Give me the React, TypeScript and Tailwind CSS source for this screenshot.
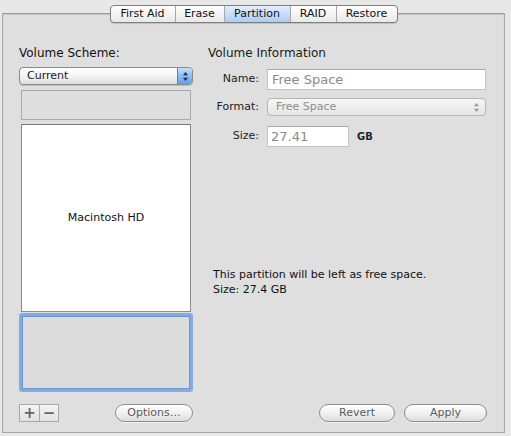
import React from "react";

const font = { fontFamily: '"DejaVu Sans", "Liberation Sans", sans-serif' };

const TABS = [
  { label: "First Aid", w: "w-[64px]" },
  { label: "Erase", w: "w-[49px]" },
  { label: "Partition", w: "w-[66px]", active: true },
  { label: "RAID", w: "w-[46px]" },
  { label: "Restore", w: "w-[61px]" },
];

function Arrows({ color }: { color: string }) {
  return (
    <svg width="7" height="11" viewBox="0 0 7 11">
      <path d="M3.5 1 L6 4.2 L1 4.2 Z" fill={color} />
      <path d="M3.5 10 L6 6.8 L1 6.8 Z" fill={color} />
    </svg>
  );
}

function PillButton({ label, w }: { label: string; w: string }) {
  return (
    <div
      className={`${w} h-[18px] rounded-full border border-[#8e8e8e] bg-gradient-to-b from-[#ffffff] via-[#f1f1f1] to-[#dcdcdc] flex items-center justify-center text-[11px] text-[#5a5a5a] shadow-[0_1px_0_rgba(255,255,255,0.6)]`}
    >
      {label}
    </div>
  );
}

export default function App() {
  return (
    <div className="w-[511px] h-[436px] bg-[#e8e8e8] pt-[5px] pl-[2px] text-[#1a1a1a]" style={font}>
      <div className="w-[503px] flex flex-col">
        {/* Tabs */}
        <div className="relative z-10 flex justify-center">
          <div className="flex h-[18px] rounded-[4px] border border-[#7f7f7f] overflow-hidden bg-gradient-to-b from-[#ffffff] to-[#e9e9e9] shadow-[0_1px_1px_rgba(0,0,0,0.15)]">
            {TABS.map((t, i) => (
              <div
                key={t.label}
                className={`${t.w} flex items-center justify-center text-[11px] ${i > 0 ? "border-l border-[#a8a8a8]" : ""} ${
                  t.active ? "bg-gradient-to-b from-[#e4eefc] via-[#c7ddf9] to-[#a9cdf5] text-[#111]" : "text-[#111]"
                }`}
              >
                {t.label}
              </div>
            ))}
          </div>
        </div>

        {/* Panel */}
        <div className="-mt-[10px] h-[420px] border border-[#a7a7a7] border-t-[#9a9a9a] bg-[#dfdfdf] shadow-[inset_0_1px_1px_rgba(0,0,0,0.12)] flex pl-[16px] pr-[17px] pt-[31px] pb-[10px]">
          {/* Left column */}
          <div className="w-[174px] flex flex-col">
            <div className="text-[12px] leading-[16px] text-[#111]">Volume Scheme:</div>
            <div className="mt-[6px] h-[18px] rounded-[4px] border border-[#8a8a8a] flex overflow-hidden bg-gradient-to-b from-[#ffffff] via-[#f3f3f3] to-[#dedede] shadow-[0_1px_1px_rgba(0,0,0,0.15)]">
              <div className="flex-1 pl-[7px] text-[11px] leading-[16px]">Current</div>
              <div className="w-[15px] border-l border-[#5a7fb5] bg-gradient-to-b from-[#c9def9] via-[#8ebbf0] to-[#5f9ee9] flex items-center justify-center">
                <Arrows color="#1b2d4a" />
              </div>
            </div>
            <div className="mt-[5px] mx-[2px] h-[30px] border border-[#a9a9a9] bg-[#dedede]" />
            <div className="mt-[4px] mx-[2px] h-[188px] border border-[#8c8c8c] border-t-[#7a7a7a] bg-white flex items-center justify-center text-[11px] text-[#111]">
              Macintosh HD
            </div>
            <div className="mt-[1px] h-[79px] rounded-[3px] border-[3px] border-[#84ace0] bg-[#dcdcdc] shadow-[inset_0_0_0_1px_#6a95cf]" />
            <div className="mt-auto flex items-center justify-between">
              <div className="flex h-[18px] border border-[#a9a9a9] bg-gradient-to-b from-[#f4f4f4] to-[#e2e2e2]">
                <div className="w-[19px] flex items-center justify-center text-[15px] leading-none text-[#666] font-bold">+</div>
                <div className="w-[19px] border-l border-[#a9a9a9] flex items-center justify-center text-[15px] leading-none text-[#666] font-bold">−</div>
              </div>
              <PillButton label="Options…" w="w-[78px]" />
            </div>
          </div>

          {/* Right column */}
          <div className="flex-1 ml-[15px] flex flex-col">
            <div className="text-[12px] leading-[16px] text-[#1a1a1a]">Volume Information</div>
            <div className="mt-[8px] flex items-center">
              <div className="w-[51px] text-right text-[11px] text-[#222]">Name:</div>
              <div className="ml-[8px] w-[219px] h-[21px] bg-white border border-[#c3c3c3] border-t-[#a9a9a9] pl-[4px] text-[13px] leading-[19px] text-[#8a8a8a]">
                Free Space
              </div>
            </div>
            <div className="mt-[8px] flex items-center">
              <div className="w-[51px] text-right text-[11px] text-[#222]">Format:</div>
              <div className="ml-[8px] w-[219px] h-[18px] rounded-[4px] border border-[#b4b4b4] bg-gradient-to-b from-[#f6f6f6] to-[#e6e6e6] flex items-center pl-[8px] pr-[5px]">
                <span className="flex-1 text-[11px] text-[#8e8e8e]">Free Space</span>
                <Arrows color="#9a9a9a" />
              </div>
            </div>
            <div className="mt-[10px] flex items-center">
              <div className="w-[51px] text-right text-[11px] text-[#222]">Size:</div>
              <div className="ml-[8px] w-[82px] h-[21px] bg-white border border-[#c3c3c3] border-t-[#a9a9a9] pl-[3px] text-[13px] leading-[19px] text-[#8a8a8a]">
                27.41
              </div>
              <div className="ml-[8px] text-[10px] font-semibold text-[#222]">GB</div>
            </div>
            <div className="mt-[120px] ml-[5px] text-[11px] leading-[15px] text-[#111]">
              <div>This partition will be left as free space.</div>
              <div>Size: 27.4 GB</div>
            </div>
            <div className="mt-auto flex justify-end gap-[9px]">
              <PillButton label="Revert" w="w-[76px]" />
              <PillButton label="Apply" w="w-[83px]" />
            </div>
          </div>
        </div>
      </div>
    </div>
  );
}
